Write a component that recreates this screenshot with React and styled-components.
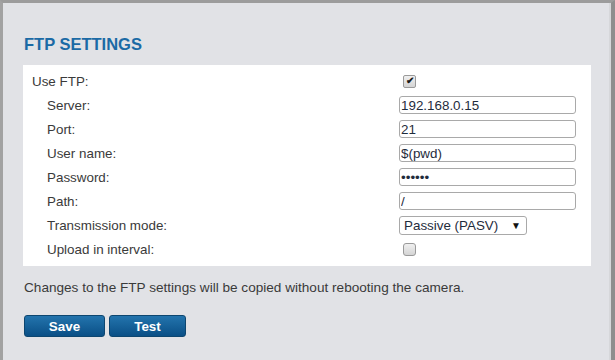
import styled, { createGlobalStyle } from 'styled-components';

const GlobalStyle = createGlobalStyle`
  html, body {
    margin: 0;
    padding: 0;
    background: #e1e2e6;
  }
  body {
    font-family: "Liberation Sans", Arial, sans-serif;
  }
`;

const ROWS = [
  { label: 'Use FTP:', type: 'check', checked: true, top: true },
  { label: 'Server:', type: 'text', value: '192.168.0.15' },
  { label: 'Port:', type: 'text', value: '21' },
  { label: 'User name:', type: 'text', value: '$(pwd)' },
  { label: 'Password:', type: 'password', value: 'secret' },
  { label: 'Path:', type: 'text', value: '/' },
  { label: 'Transmission mode:', type: 'select', value: 'Passive (PASV)' },
  { label: 'Upload in interval:', type: 'check', checked: false },
];

const App = () => {
  return (
    <>
      <GlobalStyle />
      <Frame>
        <Inner>
          <Title>FTP SETTINGS</Title>
          <Panel>
            {ROWS.map(row => (
              <Row key={row.label}>
                <Label sub={!row.top}>{row.label}</Label>
                <Control>
                  {row.type === 'check' && (
                    <Check checked={row.checked}>{row.checked ? '✔' : ''}</Check>
                  )}
                  {(row.type === 'text' || row.type === 'password') && (
                    <Field type={row.type} defaultValue={row.value} readOnly />
                  )}
                  {row.type === 'select' && (
                    <Select>
                      <span>{row.value}</span>
                      <Arrow>▼</Arrow>
                    </Select>
                  )}
                </Control>
              </Row>
            ))}
          </Panel>
          <Note>Changes to the FTP settings will be copied without rebooting the camera.</Note>
          <Buttons>
            <Button w={81}>Save</Button>
            <Button w={77}>Test</Button>
          </Buttons>
        </Inner>
      </Frame>
    </>
  );
};

export default App;

const Frame = styled.div`
  width: 615px;
  height: 360px;
  box-sizing: border-box;
  border-top: 3px solid #9c9c9c;
  border-left: 3px solid #a2a2a2;
  border-right: 4px solid #8e8e8e;
  background: #e1e2e6;
  overflow: hidden;
`;

const Inner = styled.div`
  height: 100%;
  box-sizing: border-box;
  border-right: 2px solid #d6d7da;
  padding: 31px 0 0 21px;
  display: flex;
  flex-direction: column;
  align-items: flex-start;
`;

const Title = styled.div`
  font-size: 16.5px;
  line-height: 20px;
  font-weight: 700;
  color: #1b6aa5;
`;

const Panel = styled.div`
  width: 568px;
  box-sizing: border-box;
  margin: 11px 0 0 -1px;
  padding: 4px 0 5px;
  background: #ffffff;
  display: flex;
  flex-direction: column;
`;

const Row = styled.div`
  height: 24px;
  display: grid;
  grid-template-columns: 376px 1fr;
  align-items: center;
`;

const Label = styled.div`
  padding-left: ${props => (props.sub ? '24px' : '9px')};
  font-size: 13.4px;
  color: #3a3a3a;
`;

const Control = styled.div`
  display: flex;
  align-items: center;
`;

const Field = styled.input`
  width: 177px;
  height: 18px;
  box-sizing: border-box;
  margin: 0;
  padding: 0 1px;
  border: 1px solid #a9a9a9;
  border-radius: 3px;
  background: #fff;
  font-family: "Liberation Sans", Arial, sans-serif;
  font-size: 13.4px;
  color: #1f2c3c;
  outline: none;
`;

const Check = styled.div`
  width: 13px;
  height: 13px;
  box-sizing: border-box;
  margin-left: 4px;
  border: 1px solid #9a9a9a;
  border-radius: ${props => (props.checked ? '2px' : '3px')};
  background: linear-gradient(#f0f0f0, #d4d4d4);
  display: flex;
  align-items: center;
  justify-content: center;
  font-size: 10px;
  font-weight: 700;
  line-height: 1;
  color: #1a1a1a;
`;

const Select = styled.div`
  width: 128px;
  height: 19px;
  box-sizing: border-box;
  border: 1px solid #a9a9a9;
  border-radius: 3px;
  padding: 0 5px 0 4px;
  display: flex;
  align-items: center;
  justify-content: space-between;
  font-size: 13.4px;
  color: #1f2c3c;
`;

const Arrow = styled.span`
  font-size: 10px;
  color: #111;
`;

const Note = styled.div`
  margin-top: 14px;
  font-size: 13.6px;
  line-height: 16px;
  color: #3a3a3a;
`;

const Buttons = styled.div`
  margin-top: 19px;
  display: flex;
  gap: 4px;
`;

const Button = styled.button`
  width: ${props => props.w}px;
  height: 22px;
  box-sizing: border-box;
  margin: 0;
  padding: 0;
  border: 1px solid #0d4670;
  border-radius: 3px;
  background: linear-gradient(#2374ad, #0a4f86);
  color: #fff;
  font-family: "Liberation Sans", Arial, sans-serif;
  font-size: 13.4px;
  font-weight: 700;
`;
